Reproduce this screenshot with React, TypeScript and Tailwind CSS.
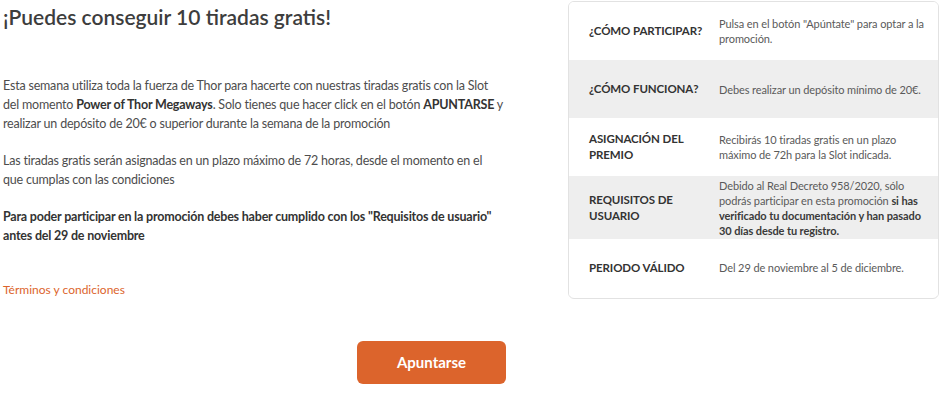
const rows = [
  {
    label: "¿CÓMO PARTICIPAR?",
    value: <>Pulsa en el botón "Apúntate" para optar a la promoción.</>,
    h: "h-[58px]",
    bg: "bg-white",
  },
  {
    label: "¿CÓMO FUNCIONA?",
    value: <>Debes realizar un depósito mínimo de 20€.</>,
    h: "h-[58px]",
    bg: "bg-[#eeeeee]",
  },
  {
    label: "ASIGNACIÓN DEL PREMIO",
    value: <>Recibirás 10 tiradas gratis en un plazo máximo de 72h para la Slot indicada.</>,
    h: "h-[58px]",
    bg: "bg-white",
  },
  {
    label: "REQUISITOS DE USUARIO",
    value: (
      <>
        Debido al Real Decreto 958/2020, sólo podrás participar en esta promoción{" "}
        <b className="font-bold text-[#3a3a3a]">
          si has verificado tu documentación y han pasado 30 días desde tu registro.
        </b>
      </>
    ),
    h: "h-[63px]",
    bg: "bg-[#eeeeee]",
  },
  {
    label: "PERIODO VÁLIDO",
    value: <>Del 29 de noviembre al 5 de diciembre.</>,
    h: "h-[57px]",
    bg: "bg-white",
  },
];

export default function App() {
  return (
    <div className="w-[940px] h-[400px] bg-white overflow-hidden font-['Lato',sans-serif]">
      <div className="flex">
        {/* intro text */}
        <div className="w-[505px] pl-[3px] text-[12.5px] leading-[19px] tracking-[-0.2px] text-[#4d4d4d]">
          <h1 className="mt-[3px] text-[21px] leading-[28px] font-semibold tracking-normal text-[#3d3d3d]">
            ¡Puedes conseguir 10 tiradas gratis!
          </h1>
          <p className="mt-[45px]">
            Esta semana utiliza toda la fuerza de Thor para hacerte con nuestras tiradas gratis con la Slot
            del momento <b className="font-bold text-[#333]">Power of Thor Megaways</b>. Solo tienes que hacer
            click en el botón <b className="font-bold text-[#333]">APUNTARSE</b> y realizar un depósito de 20€
            o superior durante la semana de la promoción
          </p>
          <p className="mt-[18px]">
            Las tiradas gratis serán asignadas en un plazo máximo de 72 horas, desde el momento en el que
            cumplas con las condiciones
          </p>
          <p className="mt-[18px] font-bold text-[#333]">
            Para poder participar en la promoción debes haber cumplido con los "Requisitos de usuario" antes
            del 29 de noviembre
          </p>
          <a className="block mt-[35px] text-[12px] tracking-normal text-[#dc642c]">Términos y condiciones</a>
        </div>

        {/* info panel */}
        <div className="ml-auto mt-[1px] mr-[1px] w-[371px] border border-[#e2e2e2] rounded-[6px] overflow-hidden">
          {rows.map((r) => (
            <div key={r.label} className={`flex items-center ${r.h} ${r.bg}`}>
              <div className="w-[150px] pl-[20px] pr-[10px] text-[11.5px] leading-[16px] tracking-[-0.1px] font-bold text-[#333]">
                {r.label}
              </div>
              <div className="w-[215px] text-[11px] leading-[15px] tracking-[-0.1px] text-[#5a5a5a]">{r.value}</div>
            </div>
          ))}
        </div>
      </div>

      <button className="ml-[357px] mt-[42px] w-[149px] h-[43px] rounded-[6px] bg-[#dc642c] text-white text-[15px] font-bold">
        Apuntarse
      </button>
    </div>
  );
}
